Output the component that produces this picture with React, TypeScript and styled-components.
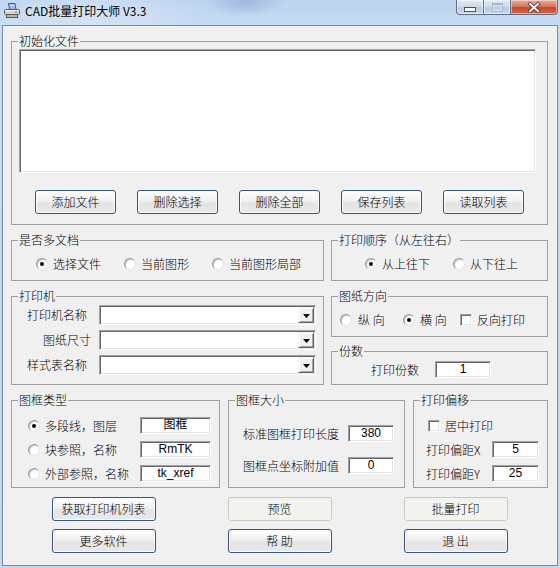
import React from "react";
import styled, { createGlobalStyle } from "styled-components";

const GlobalStyle = createGlobalStyle`
  html, body {
    margin: 0;
    padding: 0;
  }
  body {
    font-family: "Noto Sans CJK SC", "Liberation Sans", sans-serif;
    font-size: 12px;
    font-weight: 300;
    line-height: 14px;
    color: #000;
    background: #fff;
  }
`;

const Window = styled.div`
  width: 560px;
  height: 568px;
  box-sizing: border-box;
  padding: 0 2px 2px 2px;
  display: flex;
  flex-direction: column;
  background: radial-gradient(ellipse 40px 14px at 245px 2px, #9fb9df, rgba(159, 185, 223, 0) 100%),
    radial-gradient(ellipse 120px 30px at 90px 14px, #d3e3f5, rgba(211, 227, 245, 0) 100%),
    linear-gradient(#bcd3ee, #c6dbf2 24px, #c3d8f0);
`;

const TitleBar = styled.div`
  height: 25px;
  display: flex;
  justify-content: space-between;
  align-items: flex-start;
`;

const TitleLeft = styled.div`
  display: flex;
  align-items: center;
  gap: 5px;
  padding: 3px 0 0 2px;
  height: 16px;
`;

const TitleText = styled.span`
  font-family: "Noto Sans CJK SC", "Liberation Sans", sans-serif;
  font-size: 12px;
  font-weight: 400;
  line-height: 16px;
  color: #000;
`;

const Caption = styled.div`
  display: flex;
  height: 15px;
`;

const CapButton = styled.div<{ $w: number; $close?: boolean; $first?: boolean }>`
  width: ${(p) => p.$w}px;
  height: 15px;
  box-sizing: border-box;
  border: 1px solid #5f6f86;
  border-top: none;
  border-left: ${(p) => (p.$first ? "1px solid #5f6f86" : "none")};
  border-radius: ${(p) => (p.$first ? "0 0 0 4px" : p.$close ? "0 0 4px 0" : "0")};
  background: ${(p) =>
    p.$close
      ? "linear-gradient(#e9ab9c, #d87a63 45%, #c4472d 55%, #d3684b)"
      : "linear-gradient(#e3ebf5, #cddbec 45%, #b9cbe2 55%, #c9d9ee)"};
  box-shadow: inset 0 0 0 1px rgba(255, 255, 255, 0.45);
  display: flex;
  align-items: center;
  justify-content: center;
`;

const MinGlyph = styled.span`
  width: 10px;
  height: 3px;
  margin-top: 5px;
  background: #fff;
  border: 1px solid #46536a;
`;

const MaxGlyph = styled.span`
  width: 9px;
  height: 7px;
  border: 1px solid #a7b6ca;
  box-shadow: inset 0 1px 0 #a7b6ca, inset 0 0 0 1px #dde6f1;
`;

const Client = styled.div`
  flex: 1;
  border: 1px solid #7a8ba1;
  background: #f0f0f0;
  padding: 8px 9px 12px 8px;
  display: flex;
  flex-direction: column;
  gap: 8px;
`;

const Group = styled.fieldset<{ $pad: [number, number, number, number] }>`
  margin: 0;
  min-width: 0;
  box-sizing: border-box;
  border: 1px solid #a0a0a0;
  padding: ${(p) => p.$pad.map((v) => `${v}px`).join(" ")};
  & > legend {
    margin-left: ${(p) => 6 - p.$pad[3]}px;
  }
`;

const Legend = styled.legend`
  padding: 0 1px;
  height: 14px;
  line-height: 14px;
  font-size: 12px;
`;

const FileList = styled.div`
  height: 124px;
  box-sizing: border-box;
  background: #fff;
  border: 1px solid;
  border-color: #a0a0a0 #fff #fff #a0a0a0;
  box-shadow: inset 1px 1px #696969, inset -1px -1px #e3e3e3;
`;

const FilesBody = styled.div`
  display: flex;
  flex-direction: column;
  gap: 17px;
`;

const ButtonRow = styled.div`
  display: flex;
  gap: 21px;
  padding-left: 16px;
`;

const Button = styled.button<{ $w: number; $flat?: boolean }>`
  width: ${(p) => p.$w}px;
  height: 24px;
  box-sizing: border-box;
  padding: 0;
  margin: 0;
  border: 1px solid ${(p) => (p.$flat ? "#c9c9c1" : "#36557d")};
  border-radius: 3px;
  background: ${(p) =>
    p.$flat ? "#f4f4ee" : "linear-gradient(#fdfdfd, #f1f1f1 45%, #e4e4e4 55%, #e9e9e9)"};
  box-shadow: ${(p) => (p.$flat ? "none" : "inset 0 0 0 1px #f8fbff")};
  font-family: "Noto Sans CJK SC", "Liberation Sans", sans-serif;
  font-size: 12px;
  font-weight: 300;
  line-height: 14px;
  color: #000;
`;

const Split = styled.div`
  display: grid;
  grid-template-columns: 313px 217px;
  column-gap: 7px;
`;

const Stack = styled.div`
  display: flex;
  flex-direction: column;
  gap: 7px;
`;

const Triple = styled.div`
  display: grid;
  grid-template-columns: 209px 177px 135px;
  column-gap: 8px;
`;

const OptionRow = styled.div`
  display: flex;
  align-items: center;
  height: 16px;
`;

const Option = styled.span<{ $w?: number; $gap?: number }>`
  display: inline-flex;
  align-items: center;
  gap: ${(p) => p.$gap ?? 5}px;
  width: ${(p) => (p.$w ? `${p.$w}px` : "auto")};
  flex: none;
  white-space: nowrap;
`;

const RadioMark = styled.span<{ $on?: boolean }>`
  width: 12px;
  height: 12px;
  box-sizing: border-box;
  border-radius: 50%;
  border: 1px solid;
  border-color: #9a9a9a #e6e6e6 #e6e6e6 #9a9a9a;
  background: radial-gradient(circle at 60% 60%, #ffffff 40%, #ececec 100%);
  box-shadow: inset 1px 1px 0 #c4c4c4;
  display: flex;
  align-items: center;
  justify-content: center;
  &::after {
    content: "";
    width: 4px;
    height: 4px;
    border-radius: 50%;
    background: ${(p) => (p.$on ? "#000" : "transparent")};
  }
`;

const CheckMark = styled.span`
  width: 12px;
  height: 12px;
  box-sizing: border-box;
  background: #fff;
  border: 1px solid;
  border-color: #a0a0a0 #fff #fff #a0a0a0;
  box-shadow: inset 1px 1px #696969, inset -1px -1px #e3e3e3;
`;

const PrinterGrid = styled.div`
  display: grid;
  grid-template-columns: 60px 217px;
  column-gap: 12px;
  row-gap: 5px;
  align-items: center;
`;

const RowLabel = styled.span<{ $shift?: number }>`
  text-align: right;
  white-space: nowrap;
  margin-right: ${(p) => -(p.$shift ?? 0)}px;
`;

const Combo = styled.div`
  height: 20px;
  box-sizing: border-box;
  background: #fff;
  border: 1px solid;
  border-color: #a0a0a0 #fff #fff #a0a0a0;
  box-shadow: inset 1px 1px #696969, inset -1px -1px #e3e3e3;
  padding: 1px;
  display: flex;
  justify-content: flex-end;
`;

const DropButton = styled.span`
  width: 16px;
  height: 16px;
  box-sizing: border-box;
  background: #f0f0f0;
  border: 1px solid;
  border-color: #f0f0f0 #696969 #696969 #f0f0f0;
  box-shadow: inset 1px 1px #fff, inset -1px -1px #a0a0a0;
  display: flex;
  align-items: center;
  justify-content: center;
  padding-top: 1px;
`;

const Field = styled.div<{ $w: number }>`
  width: ${(p) => p.$w}px;
  height: 17px;
  box-sizing: border-box;
  background: #fff;
  border: 1px solid;
  border-color: #a0a0a0 #fff #fff #a0a0a0;
  box-shadow: inset 1px 1px #696969, inset -1px -1px #e3e3e3;
  font-family: "Liberation Sans", "Noto Sans CJK SC", sans-serif;
  font-size: 12px;
  font-weight: 400;
  line-height: 15px;
  text-align: center;
  white-space: nowrap;
  overflow: hidden;
`;

const CopiesRow = styled.div`
  display: flex;
  align-items: center;
  gap: 16px;
`;

const FrameTypeGrid = styled.div`
  display: grid;
  grid-template-columns: 112px 71px;
  grid-auto-rows: 17px;
  row-gap: 7px;
  align-items: center;
`;

const FrameSizeGrid = styled.div`
  display: grid;
  grid-template-columns: 96px 46px;
  grid-auto-rows: 17px;
  column-gap: 9px;
  row-gap: 15px;
  align-items: center;
`;

const OffsetGrid = styled.div`
  display: grid;
  grid-template-columns: 66px 47px;
  grid-auto-rows: 17px;
  row-gap: 7px;
  align-items: center;
`;

const CheckLine = styled.div`
  grid-column: 1 / span 2;
  padding-left: 2px;
  display: flex;
  align-items: center;
`;

const Footer = styled.div`
  display: grid;
  grid-template-columns: repeat(3, 176px);
  justify-content: center;
  justify-items: center;
  row-gap: 8px;
  margin-top: 1px;
`;

const PrinterIcon = () => (
  <svg width="16" height="16" viewBox="0 0 16 16">
    <polygon points="4.5,0.5 11,0.5 12,6.5 5.5,6.5" fill="#9fb2ee" stroke="#4257a8" strokeWidth="1" />
    <line x1="6" y1="2.5" x2="10.5" y2="2.5" stroke="#e8edff" />
    <rect x="0.5" y="6.5" width="15" height="5" rx="1" fill="#d6d6d6" stroke="#5a5a5a" />
    <line x1="1.5" y1="7.5" x2="14.5" y2="7.5" stroke="#f6f6f6" />
    <rect x="2.5" y="11.5" width="11" height="3" fill="#b4b4b4" stroke="#5a5a5a" />
    <rect x="11" y="8.5" width="2" height="1" fill="#3a9a3a" />
  </svg>
);

const CloseGlyph = () => (
  <svg width="14" height="11" viewBox="0 0 14 11">
    <path d="M3 2 L11 9 M11 2 L3 9" stroke="#4a3430" strokeWidth="3.6" strokeLinecap="square" fill="none" />
    <path d="M3 2 L11 9 M11 2 L3 9" stroke="#ffffff" strokeWidth="2" strokeLinecap="square" fill="none" />
  </svg>
);

const DownArrow = () => (
  <svg width="7" height="4" viewBox="0 0 7 4">
    <polygon points="0,0 7,0 3.5,4" fill="#000" />
  </svg>
);

const Radio = ({ label, on, w, gap }: { label: string; on?: boolean; w?: number; gap?: number }) => (
  <Option $w={w} $gap={gap}>
    <RadioMark $on={on} />
    {label}
  </Option>
);

const Check = ({ label, w }: { label: string; w?: number }) => (
  <Option $w={w} $gap={5}>
    <CheckMark />
    {label}
  </Option>
);

const App = () => {
  return (
    <>
      <GlobalStyle />
      <Window>
        <TitleBar>
          <TitleLeft>
            <PrinterIcon />
            <TitleText>CAD批量打印大师 V3.3</TitleText>
          </TitleLeft>
          <Caption>
            <CapButton $w={28} $first>
              <MinGlyph />
            </CapButton>
            <CapButton $w={27}>
              <MaxGlyph />
            </CapButton>
            <CapButton $w={47} $close>
              <CloseGlyph />
            </CapButton>
          </Caption>
        </TitleBar>

        <Client>
          <Group $pad={[1, 11, 10, 7]}>
            <Legend>初始化文件</Legend>
            <FilesBody>
              <FileList />
              <ButtonRow>
                <Button $w={81}>添加文件</Button>
                <Button $w={81}>删除选择</Button>
                <Button $w={81}>删除全部</Button>
                <Button $w={81}>保存列表</Button>
                <Button $w={81}>读取列表</Button>
              </ButtonRow>
            </FilesBody>
          </Group>

          <Split>
            <Group $pad={[9, 8, 8, 24]}>
              <Legend>是否多文档</Legend>
              <OptionRow>
                <Radio label="选择文件" on w={88} />
                <Radio label="当前图形" w={88} />
                <Radio label="当前图形局部" />
              </OptionRow>
            </Group>
            <Group $pad={[9, 8, 8, 33]}>
              <Legend>打印顺序（从左往右）</Legend>
              <OptionRow>
                <Radio label="从上往下" on w={88} />
                <Radio label="从下往上" />
              </OptionRow>
            </Group>
          </Split>

          <Split>
            <Group $pad={[2, 6, 9, 15]}>
              <Legend>打印机</Legend>
              <PrinterGrid>
                <RowLabel>打印机名称</RowLabel>
                <Combo>
                  <DropButton>
                    <DownArrow />
                  </DropButton>
                </Combo>
                <RowLabel $shift={4}>图纸尺寸</RowLabel>
                <Combo>
                  <DropButton>
                    <DownArrow />
                  </DropButton>
                </Combo>
                <RowLabel>样式表名称</RowLabel>
                <Combo>
                  <DropButton>
                    <DownArrow />
                  </DropButton>
                </Combo>
              </PrinterGrid>
            </Group>
            <Stack>
              <Group $pad={[9, 6, 8, 8]}>
                <Legend>图纸方向</Legend>
                <OptionRow>
                  <Radio label="纵 向" w={63} gap={6} />
                  <Radio label="横 向" on w={57} gap={5} />
                  <Check label="反向打印" />
                </OptionRow>
              </Group>
              <Group $pad={[3, 6, 6, 39]}>
                <Legend>份数</Legend>
                <CopiesRow>
                  <span>打印份数</span>
                  <Field $w={56}>1</Field>
                </CopiesRow>
              </Group>
            </Stack>
          </Split>

          <Triple>
            <Group $pad={[10, 6, 5, 16]}>
              <Legend>图框类型</Legend>
              <FrameTypeGrid>
                <Radio label="多段线，图层" on />
                <Field $w={71}>图框</Field>
                <Radio label="块参照，名称" />
                <Field $w={71}>RmTK</Field>
                <Radio label="外部参照，名称" />
                <Field $w={71}>tk_xref</Field>
              </FrameTypeGrid>
            </Group>
            <Group $pad={[18, 6, 13, 14]}>
              <Legend>图框大小</Legend>
              <FrameSizeGrid>
                <span>标准图框打印长度</span>
                <Field $w={46}>380</Field>
                <span>图框点坐标附加值</span>
                <Field $w={46}>0</Field>
              </FrameSizeGrid>
            </Group>
            <Group $pad={[10, 6, 5, 12]}>
              <Legend>打印偏移</Legend>
              <OffsetGrid>
                <CheckLine>
                  <Check label="居中打印" />
                </CheckLine>
                <span>打印偏距X</span>
                <Field $w={47}>5</Field>
                <span>打印偏距Y</span>
                <Field $w={47}>25</Field>
              </OffsetGrid>
            </Group>
          </Triple>

          <Footer>
            <Button $w={104}>获取打印机列表</Button>
            <Button $w={104} $flat>
              预览
            </Button>
            <Button $w={104} $flat>
              批量打印
            </Button>
            <Button $w={104}>更多软件</Button>
            <Button $w={104}>帮 助</Button>
            <Button $w={104}>退 出</Button>
          </Footer>
        </Client>
      </Window>
    </>
  );
};

export default App;
